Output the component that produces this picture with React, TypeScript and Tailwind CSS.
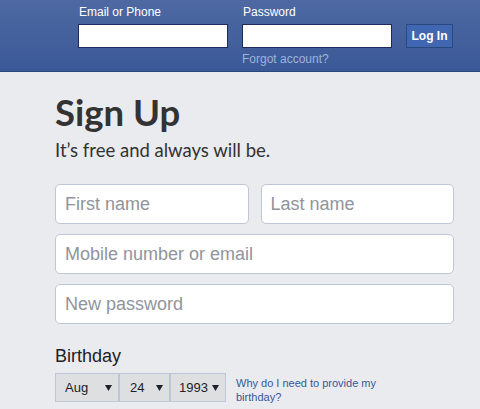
import { ChangeEvent, useState } from "react";

const months = ["Jan", "Feb", "Mar", "Apr", "May", "Jun", "Jul", "Aug", "Sep", "Oct", "Nov", "Dec"];
const days = Array.from({ length: 31 }, (_, i) => String(i + 1));
const years = Array.from({ length: 100 }, (_, i) => String(2018 - i));

function Caret() {
  return (
    <svg className="pointer-events-none absolute right-[7px] top-[12px] w-[7px] h-[6px]" viewBox="0 0 7 6">
      <path d="M0 0h7L3.5 6z" fill="#1d2129" />
    </svg>
  );
}

function BirthdaySelect({ value, options, width, pad, onChange }: { value: string; options: string[]; width: string; pad: string; onChange: (e: ChangeEvent<HTMLSelectElement>) => void }) {
  return (
    <div className={`relative ${width}`}>
      <select
        value={value}
        onChange={onChange}
        className={`appearance-none w-full h-[29px] ${pad} bg-[#dedfe0] border border-[#bdc7d8] text-[13px] text-[#1d2129] outline-none`}
      >
        {options.map((o) => <option key={o} value={o}>{o}</option>)}
      </select>
      <Caret />
    </div>
  );
}

export default function App() {
  const [bday, setBday] = useState({ month: "Aug", day: "24", year: "1993" });
  const inputCls = "h-[40px] w-full pl-[9px] pr-[10px] bg-white border border-[#bdc7d8] rounded-[5px] text-[18px] text-[#1d2129] placeholder:text-[#90949c] outline-none";

  return (
    <div className="h-screen overflow-hidden bg-[#e9ebee] font-['Liberation_Sans',Arial,sans-serif]">
      {/* Top bar */}
      <div className="h-[72px] border-b border-[#29487d] bg-gradient-to-b from-[#4e69a2] to-[#3b5998]">
        <div className="flex pl-[78px] pt-[5px] gap-[14px]">
          <div className="w-[150px]">
            <label className="block text-[12px] leading-[14px] text-white pl-[1px] mb-[5px]">Email or Phone</label>
            <input type="text" className="block w-[150px] h-[24px] bg-white border border-[#1d2a5b] px-[3px] text-[12px] outline-none" />
          </div>
          <div className="w-[150px]">
            <label className="block text-[12px] leading-[14px] text-white pl-[1px] mb-[5px]">Password</label>
            <input type="password" className="block w-[150px] h-[24px] bg-white border border-[#1d2a5b] px-[3px] text-[12px] outline-none" />
            <a href="#" className="block mt-[4px] text-[12px] leading-[14px] text-[#9cb4d8]">Forgot account?</a>
          </div>
          <button className="self-start mt-[19px] h-[24px] w-[47px] bg-[#4267b2] border border-[#29487d] text-white text-[12px] font-bold">Log In</button>
        </div>
      </div>

      {/* Sign up form */}
      <div className="pl-[55px] pt-[18px]">
        <h1 className="font-['Lato',sans-serif] font-bold text-[36.5px] leading-[44px] text-[#333]">Sign Up</h1>
        <p className="mt-[4px] font-['Lato',sans-serif] text-[18.5px] leading-[24px] text-[#333]">It’s free and always will be.</p>

        <div className="mt-[22px] w-[399px] flex flex-col gap-[10px]">
          <div className="grid grid-cols-2 gap-[12px]">
            <input className={inputCls} placeholder="First name" />
            <input className={inputCls} placeholder="Last name" />
          </div>
          <input className={inputCls} placeholder="Mobile number or email" />
          <input className={inputCls} type="password" placeholder="New password" />
        </div>

        <div className="mt-[21px] text-[18px] leading-[22px] text-[#1d2129]">Birthday</div>
        <div className="mt-[6px] flex items-start">
          <BirthdaySelect width="w-[64px]" pad="pl-[9px]" value={bday.month} options={months} onChange={(e) => setBday({ ...bday, month: e.target.value })} />
          <BirthdaySelect width="w-[51px]" pad="pl-[10px]" value={bday.day} options={days} onChange={(e) => setBday({ ...bday, day: e.target.value })} />
          <BirthdaySelect width="w-[56px]" pad="pl-[8px]" value={bday.year} options={years} onChange={(e) => setBday({ ...bday, year: e.target.value })} />
          <a href="#" className="ml-[10px] mt-[3px] w-[145px] text-[11px] leading-[14px] text-[#365899]">Why do I need to provide my birthday?</a>
        </div>
      </div>
    </div>
  );
}
